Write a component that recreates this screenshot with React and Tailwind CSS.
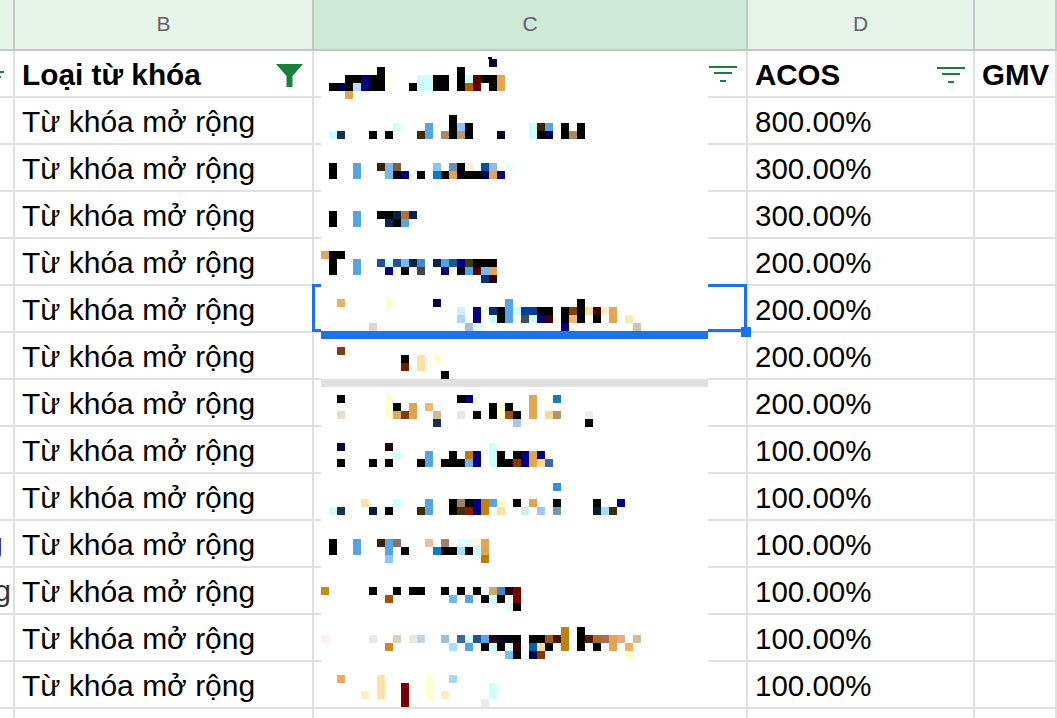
import React from 'react';

const k = '#000000';
const n = '#000080';
const d = '#000050';
const b = '#55a5e5';
const o = '#e5a550';
const c = '#ccffff';
const y = '#ffffcc';

// mosaic blocks by line: [top px, [column, colour], ...]; one block is 8x8, column 0 sits at x=321
const blocks = [
  [59, [21, '#000033']],
  [67, [7, k], [17, k]],
  [75, [3, k], [4, k], [5, n], [6, k], [7, k], [8, '#ffffee'], [12, c], [13, c], [14, k], [15, k], [17, k], [18, c], [19, '#660000'], [20, k], [21, k], [22, o]],
  [83, [1, k], [2, d], [3, k], [4, '#b8dcff'], [5, n], [6, k], [7, k], [8, '#ffffee'], [11, k], [12, c], [13, c], [14, k], [15, k], [17, k], [18, '#b85c00'], [19, '#660000'], [21, k], [22, o]],
  [91, [3, o]],
  [115, [16, k]],
  [123, [9, c], [13, b], [16, k], [17, '#88c4ff'], [18, k], [26, c], [27, '#3a2208'], [28, b], [30, k], [32, k]],
  [131, [1, c], [2, '#1a3055'], [6, k], [8, k], [12, '#402a08'], [13, b], [15, '#aa8866'], [16, k], [17, '#b89870'], [18, k], [22, '#000022'], [26, c], [27, k], [28, d], [30, k], [31, '#b08860'], [32, k]],
  [163, [1, k], [4, b], [7, '#3a2208'], [8, '#77b8f0'], [9, '#7a6040'], [14, '#88c4ff'], [16, '#6a90b8'], [17, k], [18, '#ffeedd'], [20, '#0050a0'], [21, '#99b8dd'], [23, '#eeffff']],
  [171, [1, k], [4, b], [8, '#77b8f0'], [9, k], [10, n], [12, k], [14, '#0080c0'], [15, k], [16, o], [17, k], [18, k], [19, k], [20, d], [21, o], [22, n]],
  [211, [1, k], [4, b], [7, k], [8, k], [9, '#0a2040'], [10, '#b07038'], [11, '#0a2050']],
  [219, [1, k], [4, b], [8, '#0a2a50'], [9, k], [10, b]],
  [251, [0, o], [1, k], [2, k]],
  [259, [1, k], [4, b], [7, '#205090'], [8, '#ddffff'], [9, '#205590'], [10, '#77b8f0'], [11, '#0a2050'], [12, '#4488cc'], [14, '#0a2050'], [15, '#55a0e0'], [16, '#205590'], [17, n], [18, '#3a3a10'], [19, k], [20, k], [21, k]],
  [267, [1, k], [4, b], [8, n], [10, k], [12, '#444444'], [15, n], [17, k], [18, b], [19, '#550000'], [20, '#77b8f0'], [21, o]],
  [275, [20, '#003080'], [21, '#330000']],
  [299, [2, '#e8b060'], [8, y], [14, d], [23, b], [32, k]],
  [307, [17, '#ccf0ff'], [19, n], [21, '#003070'], [22, k], [23, b], [24, c], [25, '#0040a0'], [26, '#004090'], [27, k], [28, k], [30, k], [31, '#884000'], [32, k], [33, '#ffdda8'], [34, '#440000'], [35, '#fff0d0'], [36, o]],
  [315, [17, '#a8d8ff'], [19, n], [21, c], [22, k], [23, b], [25, '#445050'], [26, c], [27, n], [28, '#440000'], [30, k], [31, '#f0b870'], [32, k], [34, k], [36, o], [38, '#ffe8b0']],
  [323, [6, '#e0d4cc'], [18, '#a8c0e0'], [19, '#ddffff'], [30, n], [39, '#d0c4b0']],
  [347, [2, '#8a3a10']],
  [355, [10, k], [12, '#ffe0a0'], [14, y]],
  [363, [10, '#771800'], [12, '#ffe0a0']],
  [371, [15, k]],
  [395, [2, k], [8, y], [17, k], [18, n], [26, o], [29, '#1878c0']],
  [403, [8, y], [9, k], [11, '#e5a050'], [13, '#f0b878'], [21, k], [22, y], [23, k], [26, o]],
  [411, [2, '#e8dccc'], [8, y], [9, '#e0a860'], [10, '#7a4010'], [11, '#e5a050'], [14, '#d0b898'], [17, '#e8e8e0'], [19, k], [21, k], [22, y], [23, '#a05010'], [24, k], [26, o], [28, '#ffd898'], [29, '#b09868'], [33, '#e8eeee']],
  [419, [14, '#1a3050'], [24, '#a8c8e8'], [33, k]],
  [443, [2, '#000040'], [8, '#200000'], [21, c]],
  [451, [9, c], [13, b], [16, k], [18, '#c07800'], [19, n], [21, c], [22, k], [24, k], [25, n], [26, o], [27, n]],
  [459, [2, k], [6, k], [8, k], [12, k], [13, b], [15, k], [16, k], [17, k], [18, '#77b0e8'], [19, n], [21, c], [22, k], [23, k], [24, '#883808'], [25, n], [26, o], [27, '#ffd898'], [28, '#3a68b0']],
  [483, [29, '#3a90d8']],
  [499, [5, '#ffe0a8'], [9, c], [13, b], [16, k], [17, '#a08068'], [18, k], [19, n], [20, '#c88000'], [21, b], [22, y], [24, k], [26, o], [29, k], [34, k], [37, n]],
  [507, [1, c], [2, '#1a3055'], [6, '#002040'], [8, k], [12, '#402a08'], [13, b], [16, k], [17, '#4a2a10'], [18, '#881800'], [19, n], [20, '#c88000'], [22, '#ffe0a0'], [25, '#d0e8ff'], [27, '#a0c8f0'], [29, '#7098b8'], [34, '#002030'], [35, '#a0e0ff'], [36, '#402a10']],
  [539, [1, k], [4, b], [7, '#3a2208'], [8, b], [9, '#907060'], [13, '#e8c0a0'], [15, '#a08070'], [17, '#ddffff'], [18, '#ddffff'], [19, '#fff8e0'], [20, o]],
  [547, [1, k], [4, b], [8, b], [10, k], [14, '#0080c8'], [15, k], [16, k], [17, '#a0e0ff'], [18, k], [19, c], [20, o]],
  [555, [8, '#88c8ff'], [20, '#c07800']],
  [587, [0, '#c88a10'], [6, k], [9, k], [11, k], [12, k], [15, k], [17, k], [19, k], [21, '#d0a868'], [22, '#4880c0'], [23, '#200010'], [24, '#770000']],
  [595, [8, '#a85000'], [16, '#70b8f0'], [18, b], [20, k], [21, c], [22, k], [24, '#770000']],
  [603, [23, '#e0ffff'], [24, k]],
  [627, [30, '#c08010'], [32, k]],
  [635, [0, '#fff0f0'], [6, '#e8e8e8'], [9, '#e0d0b0'], [11, '#e8e8e0'], [12, '#b8d8e8'], [15, '#a0bcd8'], [17, '#4068a0'], [18, '#ddffff'], [19, '#205590'], [20, b], [21, '#330010'], [22, '#000020'], [23, k], [24, k], [26, k], [27, k], [28, '#a05820'], [29, '#401800'], [30, '#c08010'], [32, k], [33, '#4a2008'], [34, '#b06828'], [35, '#a07050'], [36, o], [37, '#d8b090'], [39, '#d8b898']],
  [643, [8, '#d08820'], [16, '#a8e0ff'], [18, b], [20, k], [21, c], [22, k], [23, '#ddffff'], [24, '#330000'], [26, '#0060b0'], [27, '#ffd898'], [28, k], [30, '#c08010'], [32, k], [34, k], [36, o], [38, '#f0b060']],
  [651, [23, '#77c0ff'], [24, k], [26, d], [27, '#883808'], [38, y]],
  [675, [2, '#f0a860'], [7, '#ffe0a8'], [13, y], [16, '#a8d8ff']],
  [683, [7, '#ffe0a8'], [10, '#770000'], [13, y], [21, c]],
  [691, [5, '#ffecc0'], [7, '#ffe0a8'], [10, '#770000'], [13, y], [15, '#ffecc0'], [21, c]],
  [699, [10, '#770000'], [20, '#e8eeee']],
];

const rows = [
  ['', '800.00%'],
  ['', '300.00%'],
  ['', '300.00%'],
  ['', '200.00%'],
  ['', '200.00%'],
  ['', '200.00%'],
  ['', '200.00%'],
  ['', '100.00%'],
  ['', '100.00%'],
  ['g', '100.00%', 'pr-[10px]'],
  ['g', '100.00%', 'pr-[2px]'],
  ['', '100.00%'],
  ['', '100.00%'],
  ['', ''],
];

function ColHead({ label, selected }) {
  return (
    <div className={`flex h-[51px] items-center justify-center border-r-2 border-b-2 border-[#c4c7c5] pb-[2px] text-[21px] text-[#5f6368] ${selected ? 'bg-[#ceead6]' : 'bg-[#e6f4ea]'}`}>
      {label}
    </div>
  );
}

function FilterLines({ className = '' }) {
  return (
    <svg width="28" height="16" viewBox="0 0 28 16" className={`shrink-0 ${className}`}>
      <path d="M0 0h28v2H0zM5 6h18v2H5zM11 14h6v2h-6z" fill="#188038" />
    </svg>
  );
}

function Cell({ children, className = '' }) {
  return (
    <div className={`flex h-[47px] items-center overflow-hidden border-r-2 border-b-2 border-[#e0e0e0] pl-2 whitespace-nowrap ${className}`}>
      {children}
    </div>
  );
}

function Mosaic() {
  return (
    <svg width="387" height="656" viewBox="321 51 387 656" shapeRendering="crispEdges" className="absolute inset-0">
      <rect x="488" y="57" width="4" height="2" fill="#000033" />
      {blocks.map(([top, ...items]) =>
        items.map(([col, fill]) => (
          <rect key={`${top}-${col}`} x={321 + col * 8} y={top} width="8" height="8" fill={fill} />
        ))
      )}
    </svg>
  );
}

export default function App() {
  return (
    <div className="relative h-screen overflow-hidden bg-white text-[29.5px] text-black [font-family:'Liberation_Sans',Arial,sans-serif]">
      <div className="grid grid-cols-[15px_299px_434px_227px_1fr]">
        <ColHead label="" />
        <ColHead label="B" />
        <ColHead label="C" selected />
        <ColHead label="D" />
        <ColHead label="" />

        {/* filter header row */}
        <Cell className="!pl-0 pt-[3px]">
          <svg width="4" height="8" viewBox="0 0 4 8" className="shrink-0">
            <path d="M0 0h4v2H0zM0 5h1v2H0z" fill="#188038" />
          </svg>
        </Cell>
        <Cell className="justify-between !pl-[7px] pt-[3px] pr-[9px] font-bold">
          <span className="text-[29.8px]">Loại từ khóa</span>
          <svg width="27" height="23" viewBox="0 0 27 23" className="shrink-0">
            <path d="M0 0h27L16.500 12v11h-6V12z" fill="#188038" />
          </svg>
        </Cell>
        <Cell />
        <Cell className="justify-between !pl-[7px] pt-[3px] pr-[8px] font-bold">
          <span>ACOS</span>
          <FilterLines className="-mt-[1px]" />
        </Cell>
        <Cell className="!pl-[7px] pt-[3px] font-bold">GMV</Cell>

        {rows.map(([overflow, acos, inset], i) => (
          <React.Fragment key={i}>
            <Cell className={`justify-end !pl-0 pt-[2px] text-[#333333] ${inset || ''}`}>{overflow}</Cell>
            <Cell className="!pl-[7px] pt-[1px] text-[30px]">{acos ? 'Từ khóa mở rộng' : ''}</Cell>
            <Cell className={i === 4 ? 'relative !overflow-visible' : ''}>
              {i === 4 && (
                <div className="absolute top-[-2px] left-[-2px] h-[48px] w-[435px] border-[3px] border-[#1a73e8]" />
              )}
            </Cell>
            <Cell className="!pl-[7px] pt-[3px]">{acos}</Cell>
            <Cell />
          </React.Fragment>
        ))}
      </div>

      {/* redacted patch over column C */}
      <div className="absolute top-[51px] left-[321px] h-[656px] w-[387px] bg-white">
        <Mosaic />
        <div className="absolute top-[280px] left-0 h-2 w-full bg-[#1a73e8]" />
        <div className="absolute top-[328px] left-0 h-2 w-full bg-[#e0e0e0]" />
      </div>

      <div className="absolute top-[66px] left-[709px]">
        <FilterLines />
      </div>

      {/* selection handle */}
      <div className="absolute top-[327px] left-[741px] h-[10px] w-[10px] bg-[#1a73e8]" />
    </div>
  );
}
